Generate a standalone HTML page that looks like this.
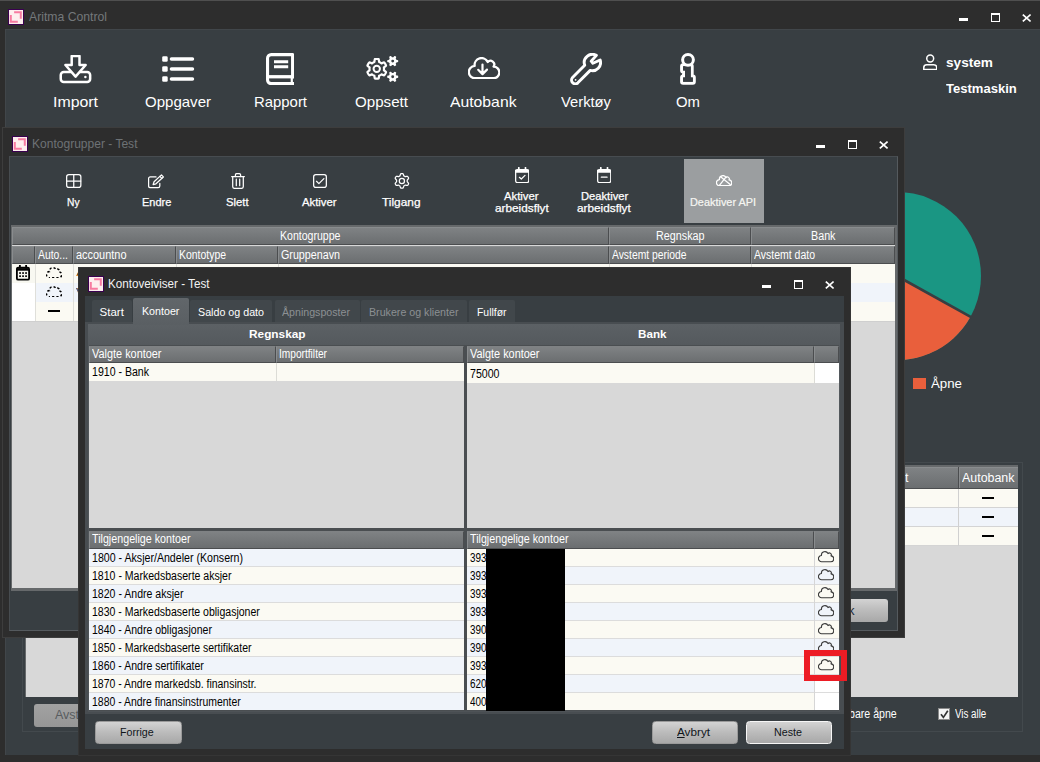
<!DOCTYPE html>
<html><head><meta charset="utf-8"><title>Aritma Control</title><style>
html,body{margin:0;padding:0;}
body{width:1040px;height:762px;overflow:hidden;background:#2d2d2d;font-family:"Liberation Sans", sans-serif;position:relative;}
div,svg,span{position:absolute;}
span.t{white-space:nowrap;line-height:1;transform-origin:0 0;}
</style></head><body>
<div style="left:0px;top:0px;width:1040px;height:1px;background:#4f4f4f;"></div>
<div style="left:5px;top:29px;width:1035px;height:726px;background:#383e42;border-left:1px solid #41464a;border-top:1px solid #41464a;box-sizing:border-box;"></div>
<svg style="left:8px;top:9px;" width="16" height="16" viewBox="0 0 16 16"><rect x="0.5" y="0.5" width="15" height="15" fill="#fdeeee" stroke="#3a0050"/><path d="M6.1 3.25H12.8V9.8" fill="none" stroke="#f77ba1" stroke-width="2"/><path d="M2.8 5.9V12.75H9.8" fill="none" stroke="#f77ba1" stroke-width="2"/></svg>
<span class="t" style="left:28.50px;top:10.00px;font-size:13px;color:#74787b;transform:scaleX(0.9389);">Aritma Control</span>
<div style="left:958.8px;top:18px;width:9.5px;height:3px;background:#fff;"></div>
<div style="left:991px;top:12.8px;width:7.2px;height:6px;border:1px solid #fff;border-top:2px solid #fff;"></div>
<svg style="left:1021.8px;top:13.6px;" width="9.4" height="8" viewBox="0 0 9.4 8"><path d="M0.8 0.6L8.6 7.4M8.6 0.6L0.8 7.4" stroke="#fff" stroke-width="1.7" fill="none"/></svg>
<span class="t" style="left:53.00px;top:95.00px;font-size:14.6px;color:#fff;transform:scaleX(1.0880);">Import</span>
<span class="t" style="left:145.00px;top:95.00px;font-size:14.6px;color:#fff;transform:scaleX(1.0297);">Oppgaver</span>
<span class="t" style="left:253.50px;top:95.00px;font-size:14.6px;color:#fff;transform:scaleX(1.0208);">Rapport</span>
<span class="t" style="left:355.00px;top:95.00px;font-size:14.6px;color:#fff;transform:scaleX(1.0370);">Oppsett</span>
<span class="t" style="left:450.05px;top:95.00px;font-size:14.6px;color:#fff;transform:scaleX(1.0783);">Autobank</span>
<span class="t" style="left:561.00px;top:95.00px;font-size:14.6px;color:#fff;transform:scaleX(1.0107);">Verktøy</span>
<span class="t" style="left:676.20px;top:95.00px;font-size:14.6px;color:#fff;transform:scaleX(1.0206);">Om</span>
<span class="t" style="left:945.90px;top:56.00px;font-size:13.2px;color:#fff;font-weight:700;transform:scaleX(1.0337);">system</span>
<span class="t" style="left:946.30px;top:82.00px;font-size:13.2px;color:#fff;font-weight:700;transform:scaleX(0.9889);">Testmaskin</span>
<svg style="left:59.1px;top:55px;" width="33" height="29" viewBox="0 0 33 29"><g fill="none" stroke="#fff" stroke-linejoin="round" stroke-linecap="round" stroke-width="2.5"><path d="M12.7 10V1H20.5V10H26.65L16.55 21.65L6.45 10Z"/><path d="M11.8 16.95H4.75A3 3 0 0 0 1.75 19.95V23.95A3 3 0 0 0 4.75 26.95H28.15A3 3 0 0 0 31.15 23.95V19.95A3 3 0 0 0 28.15 16.95H21.3"/></g><circle cx="26.4" cy="21.9" r="1.25" fill="#fff"/></svg>
<svg style="left:162px;top:56px;" width="33" height="26" viewBox="0 0 33 26"><rect x="0.2" y="0.25" width="5.5" height="5.5" rx="1.3" fill="#fff"/><rect x="7.7" y="1.25" width="24.5" height="3.5" rx="1.75" fill="#fff"/><rect x="0.2" y="10.25" width="5.5" height="5.5" rx="1.3" fill="#fff"/><rect x="7.7" y="11.25" width="24.5" height="3.5" rx="1.75" fill="#fff"/><rect x="0.2" y="20.25" width="5.5" height="5.5" rx="1.3" fill="#fff"/><rect x="7.7" y="21.25" width="24.5" height="3.5" rx="1.75" fill="#fff"/></svg>
<svg style="left:266px;top:52.7px;" width="28.4" height="32.4" viewBox="0 0 28.4 32.4"><g fill="none" stroke="#fff" stroke-linejoin="round" stroke-width="3.1"><path d="M26.6 25.3V1.6H5.2A3.65 3.65 0 0 0 1.55 5.25V27A3.65 3.65 0 0 0 5.2 30.65H28.2"/><path d="M28.1 23.75H3" stroke-width="3.3"/><path d="M25.8 23.75V30.65" stroke-width="2.2"/><path d="M8 8.8H22.2M8 13.8H22.2" stroke-width="3"/></g></svg>
<svg style="left:364px;top:54px;" width="36" height="30" viewBox="0 0 36 30"><g fill="none" stroke="#fff" stroke-linejoin="round" stroke-linecap="round" stroke-width="2.2"><path d="M20.00 14.85L19.98 14.38L19.94 13.90L19.87 13.43L21.01 12.64L22.07 11.69L21.85 11.08L21.58 10.49L21.28 9.93L20.94 9.38L20.56 8.85L20.15 8.36L18.80 8.80L17.53 9.39L17.16 9.10L16.78 8.82L16.38 8.57L15.96 8.35L15.52 8.15L15.08 7.98L14.96 6.59L14.67 5.20L14.04 5.08L13.39 5.02L12.75 5.00L12.11 5.02L11.46 5.08L10.83 5.20L10.54 6.59L10.42 7.98L9.98 8.15L9.54 8.35L9.13 8.57L8.72 8.82L8.34 9.10L7.97 9.39L6.70 8.80L5.35 8.36L4.94 8.85L4.56 9.38L4.22 9.93L3.92 10.49L3.65 11.08L3.43 11.69L4.49 12.64L5.63 13.43L5.56 13.90L5.52 14.38L5.50 14.85L5.52 15.32L5.56 15.80L5.63 16.27L4.49 17.06L3.43 18.01L3.65 18.62L3.92 19.21L4.22 19.77L4.56 20.32L4.94 20.85L5.35 21.34L6.70 20.90L7.97 20.31L8.34 20.60L8.72 20.88L9.12 21.13L9.54 21.35L9.98 21.55L10.42 21.72L10.54 23.11L10.83 24.50L11.46 24.62L12.11 24.68L12.75 24.70L13.39 24.68L14.04 24.62L14.67 24.50L14.96 23.11L15.08 21.72L15.52 21.55L15.96 21.35L16.38 21.13L16.78 20.88L17.16 20.60L17.53 20.31L18.80 20.90L20.15 21.34L20.56 20.85L20.94 20.32L21.28 19.78L21.58 19.21L21.85 18.62L22.07 18.01L21.01 17.06L19.87 16.27L19.94 15.80L19.98 15.32Z"/><circle cx="12.75" cy="14.85" r="3.2" stroke-width="2"/></g><path d="M34.20 7.10L34.18 6.62L34.12 6.14L33.24 5.88L32.36 5.77L32.23 5.45L32.08 5.15L31.89 4.86L31.69 4.59L32.02 3.78L32.24 2.89L31.85 2.59L31.45 2.34L31.02 2.12L30.58 1.93L29.92 2.56L29.38 3.26L29.04 3.21L28.70 3.20L28.36 3.21L28.02 3.26L27.48 2.56L26.82 1.93L26.38 2.12L25.95 2.34L25.55 2.59L25.16 2.89L25.38 3.78L25.71 4.59L25.51 4.86L25.32 5.15L25.17 5.45L25.04 5.77L24.16 5.88L23.28 6.14L23.22 6.62L23.20 7.10L23.22 7.58L23.28 8.06L24.16 8.32L25.04 8.43L25.17 8.75L25.32 9.05L25.51 9.34L25.71 9.61L25.38 10.42L25.16 11.31L25.55 11.61L25.95 11.86L26.38 12.08L26.82 12.27L27.48 11.64L28.02 10.94L28.36 10.99L28.70 11.00L29.04 10.99L29.38 10.94L29.92 11.64L30.58 12.27L31.02 12.08L31.45 11.86L31.85 11.61L32.24 11.31L32.02 10.42L31.69 9.61L31.89 9.34L32.08 9.05L32.23 8.75L32.36 8.43L33.24 8.32L34.12 8.06L34.18 7.58Z" fill="#fff"/><path d="M34.20 22.80L34.18 22.32L34.12 21.84L33.24 21.58L32.36 21.47L32.23 21.15L32.08 20.85L31.89 20.56L31.69 20.29L32.02 19.48L32.24 18.59L31.85 18.29L31.45 18.04L31.02 17.82L30.58 17.63L29.92 18.26L29.38 18.96L29.04 18.91L28.70 18.90L28.36 18.91L28.02 18.96L27.48 18.26L26.82 17.63L26.38 17.82L25.95 18.04L25.55 18.29L25.16 18.59L25.38 19.48L25.71 20.29L25.51 20.56L25.32 20.85L25.17 21.15L25.04 21.47L24.16 21.58L23.28 21.84L23.22 22.32L23.20 22.80L23.22 23.28L23.28 23.76L24.16 24.02L25.04 24.13L25.17 24.45L25.32 24.75L25.51 25.04L25.71 25.31L25.38 26.12L25.16 27.01L25.55 27.31L25.95 27.56L26.38 27.78L26.82 27.97L27.48 27.34L28.02 26.64L28.36 26.69L28.70 26.70L29.04 26.69L29.38 26.64L29.92 27.34L30.58 27.97L31.02 27.78L31.45 27.56L31.85 27.31L32.24 27.01L32.02 26.12L31.69 25.31L31.89 25.04L32.08 24.75L32.23 24.45L32.36 24.13L33.24 24.02L34.12 23.76L34.18 23.28Z" fill="#fff"/><circle cx="28.7" cy="7.1" r="1.45" fill="#383e42"/><circle cx="28.7" cy="22.8" r="1.45" fill="#383e42"/></svg>
<svg style="left:467.7px;top:56.7px;" width="32.6" height="22.8" viewBox="0 0 32.6 22.8"><g fill="none" stroke="#fff" stroke-linejoin="round" stroke-linecap="round" stroke-width="2.3"><path d="M7.30 21.25A6.15 6.15 0 1 1 6.66 8.93A6.90 6.90 0 0 1 19.73 5.04A3.70 3.70 0 0 1 25.58 9.55A5.85 5.85 0 0 1 25.40 21.25Z"/><path d="M14.5 7.6V16.6M10.2 12.8L14.5 17.1L19 12.6" stroke-width="2.2"/></g></svg>
<svg style="left:569.7px;top:52.7px;" width="32.6" height="32.6" viewBox="0 0 32.6 32.6"><g fill="none" stroke="#fff" stroke-linejoin="round" stroke-linecap="round" stroke-width="2.9"><path d="M26.38 2.39A8.15 8.15 0 0 0 14.73 12.26L2.55 24.55A3.75 3.75 0 0 0 7.85 29.85L20.24 17.36A8.15 8.15 0 0 0 30.16 7.01L22.9 10.3L21.2 8.2Z"/></g><circle cx="5.6" cy="26.8" r="0.9" fill="#fff"/></svg>
<svg style="left:678px;top:51px;" width="20" height="36" viewBox="0 0 20 36"><g stroke="#fff" stroke-linejoin="round" fill="#383e42"><path d="M5.1 15.3H12.7V26.5H14.8V30.8H5.1V26.5H7V19.6H5.1Z" stroke-width="6" paint-order="stroke"/><path d="M5.1 15.3H12.7V26.5H14.8V30.8H5.1V26.5H7V19.6H5.1Z" stroke="none"/><circle cx="10" cy="8.8" r="5.4" stroke-width="3"/></g></svg>
<svg style="left:922.9px;top:54px;" width="14.6" height="16.4" viewBox="0 0 14.6 16.4"><g fill="none" stroke="#fff" stroke-linejoin="round" stroke-linecap="round" stroke-width="1.5"><circle cx="7.2" cy="4.45" r="3.45"/><path d="M0.75 15.45V13.8A3 3 0 0 1 3.75 10.8H10.75A3 3 0 0 1 13.75 13.8V15.45Z"/></g></svg>
<svg style="left:813px;top:191px;" width="170" height="170" viewBox="0 0 170 170"><circle cx="84" cy="85" r="84" fill="#1a9683"/><path d="M84 85 L157.5 125.8 A84 84 0 0 1 0 85 Z" fill="#e95f3c"/><path d="M84 85 L159 126.6" stroke="#383e42" stroke-width="2.6"/></svg>
<div style="left:913px;top:377.7px;width:13px;height:11px;background:#e95f3c;"></div>
<span class="t" style="left:931.20px;top:377.00px;font-size:13.5px;color:#fff;transform:scaleX(0.9832);">Åpne</span>
<div style="left:22px;top:462px;width:1001px;height:270px;background:transparent;border:1px solid #43494d;box-sizing:border-box;"></div>
<div style="left:25px;top:465px;width:993px;height:232px;background:#66696b;"></div>
<div style="left:26px;top:467px;width:992px;height:230px;background:#d8d8d8;"></div>
<div style="left:26px;top:467px;width:992px;height:22px;background:linear-gradient(#7f8284,#6b6e70);border-top:1px solid #898c8e;border-bottom:1px solid #4b4d4f;box-sizing:border-box;"></div>
<div style="left:958px;top:467px;width:1px;height:22px;background:#4b4d4f;"></div>
<div style="left:959px;top:468px;width:1px;height:20px;background:#898c8e;"></div>
<span class="t" style="left:961.50px;top:472.00px;font-size:12.5px;color:#fff;transform:scaleX(0.9938);">Autobank</span>
<span class="t" style="left:905.00px;top:472.00px;font-size:12.5px;color:#fff;">t</span>
<div style="left:26px;top:489px;width:992px;height:19px;background:#fbfaf3;border-bottom:1px solid #d4d4d4;box-sizing:border-box;"></div>
<div style="left:982px;top:497.3px;width:12.2px;height:2px;background:#000;"></div>
<div style="left:26px;top:508px;width:992px;height:19px;background:#f0f4fa;border-bottom:1px solid #d4d4d4;box-sizing:border-box;"></div>
<div style="left:982px;top:516.3px;width:12.2px;height:2px;background:#000;"></div>
<div style="left:26px;top:527px;width:992px;height:19px;background:#fbfaf3;border-bottom:1px solid #d4d4d4;box-sizing:border-box;"></div>
<div style="left:982px;top:535.3px;width:12.2px;height:2px;background:#000;"></div>
<div style="left:958px;top:489px;width:1px;height:57px;background:#d0d0d0;"></div>
<span class="t" style="left:849.30px;top:708.00px;font-size:12.5px;color:#fff;transform:scaleX(0.8471);">bare åpne</span>
<div style="left:937.5px;top:707.5px;width:10.5px;height:10.5px;background:#f4f4f4;border:1px solid #8a8a8a;"></div>
<svg style="left:938.5px;top:708.5px;" width="11" height="11" viewBox="0 0 11 11"><path d="M2 5.2L4.4 8.4L8.8 1.8" stroke="#333" stroke-width="1.7" fill="none"/></svg>
<span class="t" style="left:954.80px;top:708.00px;font-size:12.5px;color:#fff;transform:scaleX(0.7810);">Vis alle</span>
<div style="left:34.2px;top:704.3px;width:90px;height:22.3px;background:linear-gradient(#a2a2a2,#969696);border-radius:3px;"></div>
<span class="t" style="left:55.00px;top:709.00px;font-size:12.5px;color:#585c5f;">Avst</span>
<div style="left:2px;top:127px;width:903px;height:511px;background:#2d2d2d;border:1px solid #3d3d3d;box-sizing:border-box;"></div>
<div style="left:9px;top:156px;width:889px;height:475px;background:#383e42;border:1px solid #474c50;border-right-color:#555a5e;border-bottom-color:#555a5e;box-sizing:border-box;"></div>
<svg style="left:12.2px;top:136px;" width="16" height="16" viewBox="0 0 16 16"><rect x="0.5" y="0.5" width="15" height="15" fill="#fdeeee" stroke="#3a0050"/><path d="M6.1 3.25H12.8V9.8" fill="none" stroke="#f77ba1" stroke-width="2"/><path d="M2.8 5.9V12.75H9.8" fill="none" stroke="#f77ba1" stroke-width="2"/></svg>
<span class="t" style="left:31.60px;top:138.00px;font-size:12.8px;color:#6d7275;transform:scaleX(0.9405);">Kontogrupper - Test</span>
<div style="left:815.8px;top:145px;width:9.5px;height:3px;background:#fff;"></div>
<div style="left:848px;top:140px;width:7.2px;height:6px;border:1px solid #fff;border-top:2px solid #fff;"></div>
<svg style="left:879.2px;top:140.5px;" width="9.4" height="8" viewBox="0 0 9.4 8"><path d="M0.8 0.6L8.6 7.4M8.6 0.6L0.8 7.4" stroke="#fff" stroke-width="1.7" fill="none"/></svg>
<div style="left:684px;top:159px;width:80px;height:64px;background:#9b9ea0;"></div>
<span class="t" style="left:67.45px;top:197.00px;font-size:11px;color:#fff;transform:scaleX(0.9292);-webkit-text-stroke:0.25px #fff;">Ny</span>
<span class="t" style="left:141.60px;top:197.00px;font-size:11px;color:#fff;transform:scaleX(1.0014);-webkit-text-stroke:0.25px #fff;">Endre</span>
<span class="t" style="left:226.30px;top:197.00px;font-size:11px;color:#fff;transform:scaleX(1.0265);-webkit-text-stroke:0.25px #fff;">Slett</span>
<span class="t" style="left:302.30px;top:197.00px;font-size:11px;color:#fff;transform:scaleX(1.0290);-webkit-text-stroke:0.25px #fff;">Aktiver</span>
<span class="t" style="left:382.25px;top:197.00px;font-size:11px;color:#fff;transform:scaleX(1.0793);-webkit-text-stroke:0.25px #fff;">Tilgang</span>
<span class="t" style="left:504.40px;top:191.00px;font-size:11px;color:#fff;transform:scaleX(1.0290);-webkit-text-stroke:0.25px #fff;">Aktiver</span>
<span class="t" style="left:495.45px;top:203.00px;font-size:11px;color:#fff;transform:scaleX(1.0710);-webkit-text-stroke:0.25px #fff;">arbeidsflyt</span>
<span class="t" style="left:580.60px;top:191.00px;font-size:11px;color:#fff;transform:scaleX(1.0157);-webkit-text-stroke:0.25px #fff;">Deaktiver</span>
<span class="t" style="left:577.15px;top:203.00px;font-size:11px;color:#fff;transform:scaleX(1.0710);-webkit-text-stroke:0.25px #fff;">arbeidsflyt</span>
<span class="t" style="left:690.40px;top:197.00px;font-size:11px;color:#f6f6f2;transform:scaleX(0.9904);-webkit-text-stroke:0.2px #f6f6f2;">Deaktiver API</span>
<svg style="left:66px;top:174px;" width="15.5" height="14" viewBox="0 0 15.5 14"><g fill="none" stroke="#fff" stroke-linejoin="round" stroke-linecap="round" stroke-width="1.25"><rect x="0.65" y="0.65" width="14.2" height="12.7" rx="2.2"/><path d="M7.75 0.8V13.2M0.8 7H14.7"/></g></svg>
<svg style="left:147.9px;top:173.7px;" width="17" height="15" viewBox="0 0 17 15"><g fill="none" stroke="#fff" stroke-linejoin="round" stroke-linecap="round" stroke-width="1.25"><path d="M8 2.9H2.3A1.7 1.7 0 0 0 0.6 4.6V12A1.7 1.7 0 0 0 2.3 13.7H10.1A1.7 1.7 0 0 0 11.8 12V9.4"/><path d="M5.1 10.6L6.05 7.74L13.45 0.88L15.35 2.92L7.95 9.78Z"/><path d="M11.9 2.4L13.8 4.4"/></g></svg>
<svg style="left:231px;top:173px;" width="14" height="16" viewBox="0 0 14 16"><g fill="none" stroke="#fff" stroke-linejoin="round" stroke-linecap="round" stroke-width="1.25"><path d="M0.6 3.6H13.4"/><path d="M4.4 3.6V2A1.4 1.4 0 0 1 5.8 0.6H8.2A1.4 1.4 0 0 1 9.6 2V3.6"/><path d="M1.7 3.6V13.6A1.8 1.8 0 0 0 3.5 15.4H10.5A1.8 1.8 0 0 0 12.3 13.6V3.6"/><path d="M5.3 6.2V12.7M8.7 6.2V12.7"/></g></svg>
<svg style="left:312.9px;top:174px;" width="14" height="14" viewBox="0 0 14 14"><g fill="none" stroke="#fff" stroke-linejoin="round" stroke-linecap="round" stroke-width="1.25"><rect x="0.65" y="0.65" width="12.7" height="12.7" rx="2.2"/><path d="M3.5 7.3L5.9 9.6L10.9 4.6"/></g></svg>
<svg style="left:392px;top:171px;" width="20" height="20" viewBox="0 0 20 20"><g fill="none" stroke="#fff" stroke-linejoin="round" stroke-linecap="round" stroke-width="1.25" stroke-width="1.2"><path d="M15.20 9.90L15.18 9.44L15.32 8.94L15.99 8.27L16.57 7.47L16.52 6.81L16.22 6.25L15.88 5.71L15.34 5.34L14.35 5.45L13.44 5.69L12.94 5.56L12.55 5.31L12.14 5.10L11.78 4.73L11.53 3.81L11.13 2.91L10.54 2.63L9.90 2.60L9.26 2.63L8.67 2.91L8.27 3.81L8.02 4.73L7.66 5.10L7.25 5.31L6.86 5.56L6.36 5.69L5.45 5.45L4.46 5.34L3.92 5.71L3.58 6.25L3.28 6.81L3.23 7.47L3.81 8.27L4.48 8.94L4.62 9.44L4.60 9.90L4.62 10.36L4.48 10.86L3.81 11.53L3.23 12.33L3.28 12.99L3.58 13.55L3.92 14.09L4.46 14.46L5.45 14.35L6.36 14.11L6.86 14.24L7.25 14.49L7.66 14.70L8.02 15.07L8.27 15.99L8.67 16.89L9.26 17.17L9.90 17.20L10.54 17.17L11.13 16.89L11.53 15.99L11.78 15.07L12.14 14.70L12.55 14.49L12.94 14.24L13.44 14.11L14.35 14.35L15.34 14.46L15.88 14.09L16.22 13.55L16.52 12.99L16.57 12.33L15.99 11.53L15.32 10.86L15.18 10.36Z"/><circle cx="9.9" cy="9.9" r="2.6"/></g></svg>
<svg style="left:514.8px;top:166.9px;" width="14.4" height="16.4" viewBox="0 0 14.4 16.4"><g fill="none" stroke="#fff" stroke-linejoin="round" stroke-linecap="round" stroke-width="1.25"><rect x="0.65" y="2.6" width="13.1" height="13.1" rx="1.9"/><path d="M0.8 4.2H13.6" stroke-width="3"/><path d="M3.8 0.7V3M10.5 0.7V3" stroke-width="1.7"/><path d="M4.4 10.3L6.3 12L10 8.4"/></g></svg>
<svg style="left:597px;top:166.9px;" width="14.4" height="16.4" viewBox="0 0 14.4 16.4"><g fill="none" stroke="#fff" stroke-linejoin="round" stroke-linecap="round" stroke-width="1.25"><rect x="0.65" y="2.6" width="13.1" height="13.1" rx="1.9"/><path d="M0.8 4.2H13.6" stroke-width="3"/><path d="M3.8 0.7V3M10.5 0.7V3" stroke-width="1.7"/><path d="M4.3 10.2H10.1"/></g></svg>
<svg style="left:715.8px;top:174.7px;" width="16.6" height="11.5" viewBox="0 0 16.6 11.5"><g fill="none" stroke="#fff" stroke-linejoin="round" stroke-linecap="round" stroke-width="1.25" stroke-width="1.1"><path d="M3.75 10.75A3.10 3.10 0 1 1 3.42 4.52A3.50 3.50 0 0 1 10.03 2.58A1.90 1.90 0 0 1 13.04 4.86A2.95 2.95 0 0 1 12.80 10.75Z"/><path d="M3.2 10.6L10.1 1.8M4.6 1.8L14.2 9.6"/></g></svg>
<div style="left:11px;top:225.3px;width:886px;height:365.7px;background:#66696b;"></div>
<div style="left:12px;top:227.3px;width:883px;height:361px;background:#d8d8d8;"></div>
<div style="left:12px;top:227.3px;width:597.4px;height:18.2px;background:linear-gradient(#7f8284,#6b6e70);border:1px solid #4b4d4f;border-left-color:#898c8e;border-top-color:#898c8e;box-sizing:border-box;"></div>
<span class="t" style="left:280.00px;top:230.00px;font-size:12px;color:#fff;transform:scaleX(0.8802);">Kontogruppe</span>
<div style="left:609.4px;top:227.3px;width:142px;height:18.2px;background:linear-gradient(#7f8284,#6b6e70);border:1px solid #4b4d4f;border-left-color:#898c8e;border-top-color:#898c8e;box-sizing:border-box;"></div>
<span class="t" style="left:656.15px;top:230.00px;font-size:12px;color:#fff;transform:scaleX(0.8974);">Regnskap</span>
<div style="left:751.4px;top:227.3px;width:143.6px;height:18.2px;background:linear-gradient(#7f8284,#6b6e70);border:1px solid #4b4d4f;border-left-color:#898c8e;border-top-color:#898c8e;box-sizing:border-box;"></div>
<span class="t" style="left:810.95px;top:230.00px;font-size:12px;color:#fff;transform:scaleX(0.8955);">Bank</span>
<div style="left:12px;top:245.5px;width:23px;height:18.2px;background:linear-gradient(#7f8284,#6b6e70);border:1px solid #4b4d4f;border-left-color:#898c8e;border-top-color:#898c8e;box-sizing:border-box;"></div>
<div style="left:35px;top:245.5px;width:38.2px;height:18.2px;background:linear-gradient(#7f8284,#6b6e70);border:1px solid #4b4d4f;border-left-color:#898c8e;border-top-color:#898c8e;box-sizing:border-box;"></div>
<span class="t" style="left:38.00px;top:249.00px;font-size:12px;color:#fff;transform:scaleX(0.8649);">Auto...</span>
<div style="left:73.2px;top:245.5px;width:102.8px;height:18.2px;background:linear-gradient(#7f8284,#6b6e70);border:1px solid #4b4d4f;border-left-color:#898c8e;border-top-color:#898c8e;box-sizing:border-box;"></div>
<span class="t" style="left:76.00px;top:249.00px;font-size:12px;color:#fff;transform:scaleX(0.9117);">accountno</span>
<div style="left:176px;top:245.5px;width:102px;height:18.2px;background:linear-gradient(#7f8284,#6b6e70);border:1px solid #4b4d4f;border-left-color:#898c8e;border-top-color:#898c8e;box-sizing:border-box;"></div>
<span class="t" style="left:178.50px;top:249.00px;font-size:12px;color:#fff;transform:scaleX(0.8696);">Kontotype</span>
<div style="left:278px;top:245.5px;width:331.4px;height:18.2px;background:linear-gradient(#7f8284,#6b6e70);border:1px solid #4b4d4f;border-left-color:#898c8e;border-top-color:#898c8e;box-sizing:border-box;"></div>
<span class="t" style="left:280.50px;top:249.00px;font-size:12px;color:#fff;transform:scaleX(0.8933);">Gruppenavn</span>
<div style="left:609.4px;top:245.5px;width:142px;height:18.2px;background:linear-gradient(#7f8284,#6b6e70);border:1px solid #4b4d4f;border-left-color:#898c8e;border-top-color:#898c8e;box-sizing:border-box;"></div>
<span class="t" style="left:612.10px;top:249.00px;font-size:12px;color:#fff;transform:scaleX(0.8601);">Avstemt periode</span>
<div style="left:751.4px;top:245.5px;width:143.6px;height:18.2px;background:linear-gradient(#7f8284,#6b6e70);border:1px solid #4b4d4f;border-left-color:#898c8e;border-top-color:#898c8e;box-sizing:border-box;"></div>
<span class="t" style="left:754.00px;top:249.00px;font-size:12px;color:#fff;transform:scaleX(0.8736);">Avstemt dato</span>
<div style="left:12px;top:263.7px;width:883px;height:19px;background:#fbfaf3;"></div>
<div style="left:12px;top:263.7px;width:23px;height:19px;background:#f8f8f1;"></div>
<div style="left:35px;top:263.7px;width:1px;height:19px;background:#dfdfda;"></div>
<div style="left:73.2px;top:263.7px;width:1px;height:19px;background:#dfdfda;"></div>
<div style="left:176px;top:263.7px;width:1px;height:19px;background:#dfdfda;"></div>
<div style="left:278px;top:263.7px;width:1px;height:19px;background:#dfdfda;"></div>
<div style="left:609.4px;top:263.7px;width:1px;height:19px;background:#dfdfda;"></div>
<div style="left:751.4px;top:263.7px;width:1px;height:19px;background:#dfdfda;"></div>
<div style="left:12px;top:282.7px;width:883px;height:19px;background:#f0f4fa;"></div>
<div style="left:12px;top:282.7px;width:23px;height:19px;background:#fff;"></div>
<div style="left:35px;top:282.7px;width:1px;height:19px;background:#dfdfda;"></div>
<div style="left:73.2px;top:282.7px;width:1px;height:19px;background:#dfdfda;"></div>
<div style="left:176px;top:282.7px;width:1px;height:19px;background:#dfdfda;"></div>
<div style="left:278px;top:282.7px;width:1px;height:19px;background:#dfdfda;"></div>
<div style="left:609.4px;top:282.7px;width:1px;height:19px;background:#dfdfda;"></div>
<div style="left:751.4px;top:282.7px;width:1px;height:19px;background:#dfdfda;"></div>
<div style="left:12px;top:301.7px;width:883px;height:19px;background:#fbfaf3;"></div>
<div style="left:12px;top:301.7px;width:23px;height:19px;background:#fff;"></div>
<div style="left:35px;top:301.7px;width:1px;height:19px;background:#dfdfda;"></div>
<div style="left:73.2px;top:301.7px;width:1px;height:19px;background:#dfdfda;"></div>
<div style="left:176px;top:301.7px;width:1px;height:19px;background:#dfdfda;"></div>
<div style="left:278px;top:301.7px;width:1px;height:19px;background:#dfdfda;"></div>
<div style="left:609.4px;top:301.7px;width:1px;height:19px;background:#dfdfda;"></div>
<div style="left:751.4px;top:301.7px;width:1px;height:19px;background:#dfdfda;"></div>
<div style="left:12px;top:320.7px;width:883px;height:1px;background:#cfcfcf;"></div>
<div style="left:48px;top:310px;width:12.2px;height:2.1px;background:#000;"></div>
<svg style="left:16px;top:265.2px;" width="14" height="15.6" viewBox="0 0 14 15.6"><rect x="0.9" y="2.6" width="12.2" height="12.1" rx="1.3" fill="none" stroke="#000" stroke-width="1.8"/><path d="M1 4.4H13" stroke="#000" stroke-width="2.6"/><path d="M3.9 0V3.4M10.1 0V3.4" stroke="#000" stroke-width="1.8"/><rect x="3.2" y="7.2" width="1.7" height="1.7" fill="#000"/><rect x="3.2" y="10.3" width="1.7" height="1.7" fill="#000"/><rect x="6.2" y="7.2" width="1.7" height="1.7" fill="#000"/><rect x="6.2" y="10.3" width="1.7" height="1.7" fill="#000"/><rect x="9.2" y="7.2" width="1.7" height="1.7" fill="#000"/><rect x="9.2" y="10.3" width="1.7" height="1.7" fill="#000"/></svg>
<svg style="left:45.7px;top:266.7px;" width="16.6" height="11.5" viewBox="0 0 16.6 11.5"><path d="M3.75 10.75A3.10 3.10 0 1 1 3.42 4.52A3.50 3.50 0 0 1 10.03 2.58A1.90 1.90 0 0 1 13.04 4.86A2.95 2.95 0 0 1 12.80 10.75Z" fill="none" stroke="#000" stroke-width="1.5" stroke-dasharray="2.2 2.1" stroke-dashoffset="1.2"/></svg>
<svg style="left:45.7px;top:285.6px;" width="16.6" height="11.5" viewBox="0 0 16.6 11.5"><path d="M3.75 10.75A3.10 3.10 0 1 1 3.42 4.52A3.50 3.50 0 0 1 10.03 2.58A1.90 1.90 0 0 1 13.04 4.86A2.95 2.95 0 0 1 12.80 10.75Z" fill="none" stroke="#000" stroke-width="1.5" stroke-dasharray="2.2 2.1" stroke-dashoffset="1.2"/></svg>
<svg style="left:75.5px;top:270px;" width="3" height="8" viewBox="0 0 3 8"><path d="M3 0L0 6H3Z" fill="#e8902a"/><path d="M2 3.5V5" stroke="#222" stroke-width="1"/></svg>
<svg style="left:75.5px;top:288px;" width="3" height="8" viewBox="0 0 3 8"><path d="M0 0L3 7V0Z" fill="#e8902a"/><path d="M0.5 0L3 5" stroke="#2a4ea0" stroke-width="1"/></svg>
<div style="left:800px;top:598.6px;width:88.3px;height:23.6px;background:linear-gradient(#d3d3d3,#bdbdbd 45%,#a8a8a8);border-radius:3px;"></div>
<span class="t" style="left:848.30px;top:605.00px;font-size:12.5px;color:#1a2a3a;">k</span>
<div style="left:78.3px;top:267.2px;width:772.4px;height:489.3px;background:#2d2d2d;border:1px solid #353535;box-sizing:border-box;"></div>
<div style="left:85px;top:296.2px;width:759px;height:453.3px;background:#383e42;"></div>
<svg style="left:88.4px;top:276.1px;" width="16" height="16" viewBox="0 0 16 16"><rect x="0.5" y="0.5" width="15" height="15" fill="#fdeeee" stroke="#3a0050"/><path d="M6.1 3.25H12.8V9.8" fill="none" stroke="#f77ba1" stroke-width="2"/><path d="M2.8 5.9V12.75H9.8" fill="none" stroke="#f77ba1" stroke-width="2"/></svg>
<span class="t" style="left:107.80px;top:277.00px;font-size:13.2px;color:#f2f2f2;transform:scaleX(0.8838);">Kontoveiviser - Test</span>
<div style="left:761.8px;top:285px;width:9.5px;height:3px;background:#fff;"></div>
<div style="left:793.7px;top:280px;width:7.2px;height:6px;border:1px solid #fff;border-top:2px solid #fff;"></div>
<svg style="left:825px;top:280.6px;" width="9.4" height="8" viewBox="0 0 9.4 8"><path d="M0.8 0.6L8.6 7.4M8.6 0.6L0.8 7.4" stroke="#fff" stroke-width="1.7" fill="none"/></svg>
<div style="left:85px;top:322.3px;width:759px;height:391.4px;background:#484d51;"></div>
<div style="left:91.8px;top:299.8px;width:40.4px;height:22.5px;background:#41474b;border-radius:2px 2px 0 0;"></div>
<span class="t" style="left:99.60px;top:307.00px;font-size:11.5px;color:#fff;">Start</span>
<div style="left:274.6px;top:299.8px;width:85px;height:22.5px;background:#41474b;border-radius:2px 2px 0 0;"></div>
<span class="t" style="left:282.00px;top:307.00px;font-size:11.5px;color:#8c9093;transform:scaleX(0.9248);">Åpningsposter</span>
<div style="left:361px;top:299.8px;width:106px;height:22.5px;background:#41474b;border-radius:2px 2px 0 0;"></div>
<span class="t" style="left:368.50px;top:307.00px;font-size:11.5px;color:#8c9093;transform:scaleX(0.9272);">Brukere og klienter</span>
<div style="left:468.5px;top:299.8px;width:46px;height:22.5px;background:#41474b;border-radius:2px 2px 0 0;"></div>
<span class="t" style="left:476.50px;top:307.00px;font-size:11.5px;color:#fff;transform:scaleX(0.9051);">Fullfør</span>
<div style="left:190.2px;top:299.8px;width:82px;height:22.5px;background:#41474b;border-radius:2px 2px 0 0;"></div>
<span class="t" style="left:197.50px;top:307.00px;font-size:11.5px;color:#fff;transform:scaleX(0.9298);">Saldo og dato</span>
<div style="left:88.1px;top:324px;width:751.7px;height:387.7px;background:linear-gradient(#5c6165,#54595d 22px,#4e5357);"></div>
<div style="left:132.8px;top:297.9px;width:56.2px;height:27px;background:linear-gradient(#61666a,#5a5f63);border-radius:2px 2px 0 0;"></div>
<span class="t" style="left:141.60px;top:306.00px;font-size:11.5px;color:#fff;transform:scaleX(0.9285);">Kontoer</span>
<span class="t" style="left:248.60px;top:329.00px;font-size:11.5px;color:#fff;font-weight:700;transform:scaleX(1.0297);">Regnskap</span>
<span class="t" style="left:638.25px;top:329.00px;font-size:11.5px;color:#fff;font-weight:700;transform:scaleX(1.0133);">Bank</span>
<div style="left:89px;top:345px;width:750px;height:366px;background:#4a4e51;"></div>
<div style="left:89.4px;top:346px;width:375.1px;height:182px;background:#d8d8d8;"></div>
<div style="left:467.4px;top:346px;width:371.6px;height:182px;background:#d8d8d8;"></div>
<div style="left:89.4px;top:531px;width:375.1px;height:179px;background:#d8d8d8;"></div>
<div style="left:467.4px;top:531px;width:371.6px;height:179px;background:#d8d8d8;"></div>
<div style="left:89.4px;top:346px;width:186.79999999999998px;height:17px;background:linear-gradient(#7f8284,#6b6e70);border:1px solid #4b4d4f;border-left-color:#898c8e;border-top-color:#7f8284;box-sizing:border-box;"></div>
<span class="t" style="left:92.30px;top:348.00px;font-size:12px;color:#fff;transform:scaleX(0.9085);">Valgte kontoer</span>
<div style="left:276.2px;top:346px;width:188.3px;height:17px;background:linear-gradient(#7f8284,#6b6e70);border:1px solid #4b4d4f;border-left-color:#898c8e;border-top-color:#7f8284;box-sizing:border-box;"></div>
<span class="t" style="left:279.10px;top:348.00px;font-size:12px;color:#fff;transform:scaleX(0.8467);">Importfilter</span>
<div style="left:89.4px;top:363px;width:375.1px;height:18px;background:#fbfaf3;"></div>
<div style="left:276.2px;top:363px;width:1px;height:18px;background:#dcdcd6;"></div>
<span class="t" style="left:91.60px;top:366.00px;font-size:12px;color:#000;transform:scaleX(0.8807);">1910 - Bank</span>
<div style="left:467.4px;top:346px;width:346.6px;height:17px;background:linear-gradient(#7f8284,#6b6e70);border:1px solid #4b4d4f;border-left-color:#898c8e;border-top-color:#7f8284;box-sizing:border-box;"></div>
<span class="t" style="left:470.30px;top:348.00px;font-size:12px;color:#fff;transform:scaleX(0.9085);">Valgte kontoer</span>
<div style="left:814px;top:346px;width:25.0px;height:17px;background:linear-gradient(#7f8284,#6b6e70);border:1px solid #4b4d4f;border-left-color:#898c8e;border-top-color:#7f8284;box-sizing:border-box;"></div>
<div style="left:467.4px;top:363px;width:346.6px;height:20px;background:#fbfaf3;"></div>
<div style="left:814px;top:363px;width:25.0px;height:20px;background:#fff;"></div>
<div style="left:814px;top:363px;width:1px;height:20px;background:#dcdcd6;"></div>
<span class="t" style="left:469.80px;top:368.00px;font-size:12px;color:#000;transform:scaleX(0.8839);">75000</span>
<div style="left:89.4px;top:531px;width:375.1px;height:18px;background:linear-gradient(#7f8284,#6b6e70);border:1px solid #4b4d4f;border-left-color:#898c8e;border-top-color:#7f8284;box-sizing:border-box;"></div>
<span class="t" style="left:92.30px;top:533.00px;font-size:12px;color:#fff;transform:scaleX(0.8930);">Tilgjengelige kontoer</span>
<div style="left:89.4px;top:549px;width:375.1px;height:18px;background:#f0f4fa;border-bottom:1px solid #dcdcdc;box-sizing:border-box;"></div>
<span class="t" style="left:91.60px;top:552.00px;font-size:12px;color:#000;transform:scaleX(0.8843);">1800 - Aksjer/Andeler (Konsern)</span>
<div style="left:89.4px;top:567px;width:375.1px;height:18px;background:#fbfaf3;border-bottom:1px solid #dcdcdc;box-sizing:border-box;"></div>
<span class="t" style="left:91.60px;top:570.00px;font-size:12px;color:#000;transform:scaleX(0.8787);">1810 - Markedsbaserte aksjer</span>
<div style="left:89.4px;top:585px;width:375.1px;height:18px;background:#f0f4fa;border-bottom:1px solid #dcdcdc;box-sizing:border-box;"></div>
<span class="t" style="left:91.60px;top:588.00px;font-size:12px;color:#000;transform:scaleX(0.8793);">1820 - Andre aksjer</span>
<div style="left:89.4px;top:603px;width:375.1px;height:18px;background:#fbfaf3;border-bottom:1px solid #dcdcdc;box-sizing:border-box;"></div>
<span class="t" style="left:91.60px;top:606.00px;font-size:12px;color:#000;transform:scaleX(0.8765);">1830 - Markedsbaserte obligasjoner</span>
<div style="left:89.4px;top:621px;width:375.1px;height:18px;background:#f0f4fa;border-bottom:1px solid #dcdcdc;box-sizing:border-box;"></div>
<span class="t" style="left:91.60px;top:624.00px;font-size:12px;color:#000;transform:scaleX(0.8767);">1840 - Andre obligasjoner</span>
<div style="left:89.4px;top:639px;width:375.1px;height:18px;background:#fbfaf3;border-bottom:1px solid #dcdcdc;box-sizing:border-box;"></div>
<span class="t" style="left:91.60px;top:642.00px;font-size:12px;color:#000;transform:scaleX(0.8759);">1850 - Markedsbaserte sertifikater</span>
<div style="left:89.4px;top:657px;width:375.1px;height:18px;background:#f0f4fa;border-bottom:1px solid #dcdcdc;box-sizing:border-box;"></div>
<span class="t" style="left:91.60px;top:660.00px;font-size:12px;color:#000;transform:scaleX(0.8775);">1860 - Andre sertifikater</span>
<div style="left:89.4px;top:675px;width:375.1px;height:18px;background:#fbfaf3;border-bottom:1px solid #dcdcdc;box-sizing:border-box;"></div>
<span class="t" style="left:91.60px;top:678.00px;font-size:12px;color:#000;transform:scaleX(0.8714);">1870 - Andre markedsb. finansinstr.</span>
<div style="left:89.4px;top:693px;width:375.1px;height:17px;background:#f0f4fa;"></div>
<span class="t" style="left:91.60px;top:696.00px;font-size:12px;color:#000;transform:scaleX(0.8714);">1880 - Andre finansinstrumenter</span>
<div style="left:467.4px;top:531px;width:346.6px;height:18px;background:linear-gradient(#7f8284,#6b6e70);border:1px solid #4b4d4f;border-left-color:#898c8e;border-top-color:#7f8284;box-sizing:border-box;"></div>
<span class="t" style="left:470.30px;top:533.00px;font-size:12px;color:#fff;transform:scaleX(0.8930);">Tilgjengelige kontoer</span>
<div style="left:814px;top:531px;width:25.0px;height:18px;background:linear-gradient(#7f8284,#6b6e70);border:1px solid #4b4d4f;border-left-color:#898c8e;border-top-color:#7f8284;box-sizing:border-box;"></div>
<div style="left:467.4px;top:549px;width:371.6px;height:18px;background:#fbfaf3;border-bottom:1px solid #dcdcdc;box-sizing:border-box;"></div>
<div style="left:814px;top:549px;width:1px;height:18px;background:#d6d6d6;"></div>
<span class="t" style="left:469.80px;top:552.00px;font-size:12px;color:#000;transform:scaleX(0.8237);">393</span>
<div style="left:467.4px;top:567px;width:371.6px;height:18px;background:#f0f4fa;border-bottom:1px solid #dcdcdc;box-sizing:border-box;"></div>
<div style="left:814px;top:567px;width:1px;height:18px;background:#d6d6d6;"></div>
<span class="t" style="left:469.80px;top:570.00px;font-size:12px;color:#000;transform:scaleX(0.8237);">393</span>
<div style="left:467.4px;top:585px;width:371.6px;height:18px;background:#fbfaf3;border-bottom:1px solid #dcdcdc;box-sizing:border-box;"></div>
<div style="left:814px;top:585px;width:1px;height:18px;background:#d6d6d6;"></div>
<span class="t" style="left:469.80px;top:588.00px;font-size:12px;color:#000;transform:scaleX(0.8237);">393</span>
<div style="left:467.4px;top:603px;width:371.6px;height:18px;background:#f0f4fa;border-bottom:1px solid #dcdcdc;box-sizing:border-box;"></div>
<div style="left:814px;top:603px;width:1px;height:18px;background:#d6d6d6;"></div>
<span class="t" style="left:469.80px;top:606.00px;font-size:12px;color:#000;transform:scaleX(0.8237);">393</span>
<div style="left:467.4px;top:621px;width:371.6px;height:18px;background:#fbfaf3;border-bottom:1px solid #dcdcdc;box-sizing:border-box;"></div>
<div style="left:814px;top:621px;width:1px;height:18px;background:#d6d6d6;"></div>
<span class="t" style="left:469.80px;top:624.00px;font-size:12px;color:#000;transform:scaleX(0.8237);">390</span>
<div style="left:467.4px;top:639px;width:371.6px;height:18px;background:#f0f4fa;border-bottom:1px solid #dcdcdc;box-sizing:border-box;"></div>
<div style="left:814px;top:639px;width:1px;height:18px;background:#d6d6d6;"></div>
<span class="t" style="left:469.80px;top:642.00px;font-size:12px;color:#000;transform:scaleX(0.8237);">390</span>
<div style="left:467.4px;top:657px;width:371.6px;height:18px;background:#fbfaf3;border-bottom:1px solid #dcdcdc;box-sizing:border-box;"></div>
<div style="left:814px;top:657px;width:1px;height:18px;background:#d6d6d6;"></div>
<span class="t" style="left:469.80px;top:660.00px;font-size:12px;color:#000;transform:scaleX(0.8237);">393</span>
<div style="left:467.4px;top:675px;width:371.6px;height:18px;background:#f0f4fa;border-bottom:1px solid #dcdcdc;box-sizing:border-box;"></div>
<div style="left:814px;top:675px;width:25.0px;height:18px;background:#fff;border-bottom:1px solid #dcdcdc;box-sizing:border-box;"></div>
<div style="left:814px;top:675px;width:1px;height:18px;background:#d6d6d6;"></div>
<span class="t" style="left:469.80px;top:678.00px;font-size:12px;color:#000;transform:scaleX(0.8237);">620</span>
<div style="left:467.4px;top:693px;width:371.6px;height:17px;background:#fbfaf3;"></div>
<div style="left:814px;top:693px;width:25.0px;height:17px;background:#fff;"></div>
<div style="left:814px;top:693px;width:1px;height:17px;background:#d6d6d6;"></div>
<span class="t" style="left:469.80px;top:696.00px;font-size:12px;color:#000;transform:scaleX(0.8237);">400</span>
<svg style="left:817.8px;top:551px;" width="16.6" height="11.5" viewBox="0 0 16.6 11.5"><path d="M3.75 10.75A3.10 3.10 0 1 1 3.42 4.52A3.50 3.50 0 0 1 10.03 2.58A1.90 1.90 0 0 1 13.04 4.86A2.95 2.95 0 0 1 12.80 10.75Z" fill="none" stroke="#3a3a3a" stroke-width="1.1" stroke-linejoin="round"/></svg>
<svg style="left:817.8px;top:569px;" width="16.6" height="11.5" viewBox="0 0 16.6 11.5"><path d="M3.75 10.75A3.10 3.10 0 1 1 3.42 4.52A3.50 3.50 0 0 1 10.03 2.58A1.90 1.90 0 0 1 13.04 4.86A2.95 2.95 0 0 1 12.80 10.75Z" fill="none" stroke="#3a3a3a" stroke-width="1.1" stroke-linejoin="round"/></svg>
<svg style="left:817.8px;top:587px;" width="16.6" height="11.5" viewBox="0 0 16.6 11.5"><path d="M3.75 10.75A3.10 3.10 0 1 1 3.42 4.52A3.50 3.50 0 0 1 10.03 2.58A1.90 1.90 0 0 1 13.04 4.86A2.95 2.95 0 0 1 12.80 10.75Z" fill="none" stroke="#3a3a3a" stroke-width="1.1" stroke-linejoin="round"/></svg>
<svg style="left:817.8px;top:605px;" width="16.6" height="11.5" viewBox="0 0 16.6 11.5"><path d="M3.75 10.75A3.10 3.10 0 1 1 3.42 4.52A3.50 3.50 0 0 1 10.03 2.58A1.90 1.90 0 0 1 13.04 4.86A2.95 2.95 0 0 1 12.80 10.75Z" fill="none" stroke="#3a3a3a" stroke-width="1.1" stroke-linejoin="round"/></svg>
<svg style="left:817.8px;top:623px;" width="16.6" height="11.5" viewBox="0 0 16.6 11.5"><path d="M3.75 10.75A3.10 3.10 0 1 1 3.42 4.52A3.50 3.50 0 0 1 10.03 2.58A1.90 1.90 0 0 1 13.04 4.86A2.95 2.95 0 0 1 12.80 10.75Z" fill="none" stroke="#3a3a3a" stroke-width="1.1" stroke-linejoin="round"/></svg>
<svg style="left:817.8px;top:641px;" width="16.6" height="11.5" viewBox="0 0 16.6 11.5"><path d="M3.75 10.75A3.10 3.10 0 1 1 3.42 4.52A3.50 3.50 0 0 1 10.03 2.58A1.90 1.90 0 0 1 13.04 4.86A2.95 2.95 0 0 1 12.80 10.75Z" fill="none" stroke="#3a3a3a" stroke-width="1.1" stroke-linejoin="round"/></svg>
<svg style="left:817.8px;top:659px;" width="16.6" height="11.5" viewBox="0 0 16.6 11.5"><path d="M3.75 10.75A3.10 3.10 0 1 1 3.42 4.52A3.50 3.50 0 0 1 10.03 2.58A1.90 1.90 0 0 1 13.04 4.86A2.95 2.95 0 0 1 12.80 10.75Z" fill="none" stroke="#3a3a3a" stroke-width="1.1" stroke-linejoin="round"/></svg>
<div style="left:486px;top:549px;width:79px;height:162px;background:#000;"></div>
<div style="left:94.5px;top:720.6px;width:87.1px;height:23.9px;background:linear-gradient(#d3d3d3,#bdbdbd 45%,#a8a8a8);border-radius:3.5px;box-sizing:border-box;border:1px solid #9a9a9a;"></div>
<span class="t" style="left:119.70px;top:727.00px;font-size:11.5px;color:#10151a;transform:scaleX(0.9249);">Forrige</span>
<div style="left:651.6px;top:720.6px;width:86.8px;height:23.9px;background:linear-gradient(#d3d3d3,#bdbdbd 45%,#a8a8a8);border-radius:3.5px;box-sizing:border-box;border:1px solid #9a9a9a;"></div>
<span class="t" style="left:677.00px;top:727.00px;font-size:11.5px;color:#10151a;transform:scaleX(1.0188);"><u>A</u>vbryt</span>
<div style="left:745.8px;top:720.6px;width:86.7px;height:23.9px;background:linear-gradient(#d3d3d3,#bdbdbd 45%,#a8a8a8);border-radius:3.5px;box-sizing:border-box;border:1px solid #f6f6f6;"></div>
<span class="t" style="left:773.65px;top:727.00px;font-size:11.5px;color:#10151a;transform:scaleX(0.9319);">Neste</span>
<div style="left:804px;top:650px;width:43px;height:31px;border:6.6px solid #ed1c24;box-sizing:border-box;"></div>
</body></html>
